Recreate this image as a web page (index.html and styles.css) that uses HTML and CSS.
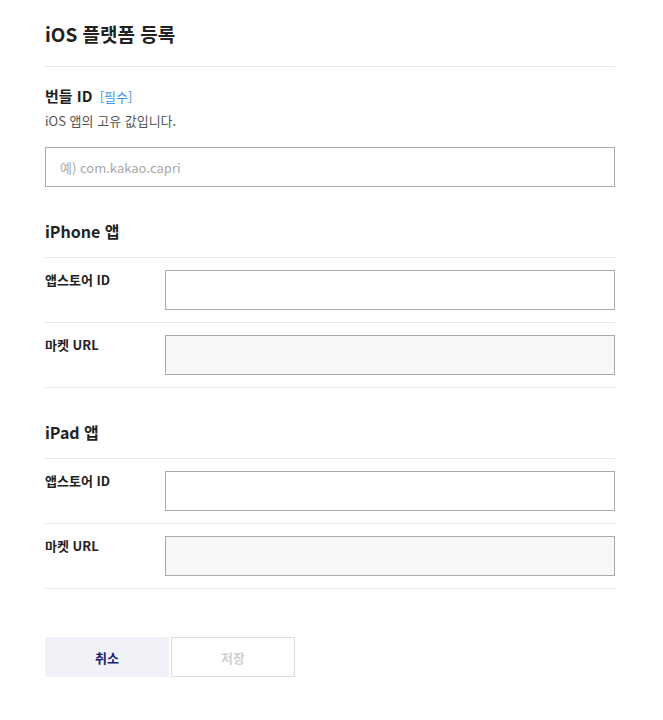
FILE: index.html
```html
<!DOCTYPE html>
<html lang="ko">
<head>
<meta charset="utf-8">
<link rel="stylesheet" href="styles.css">
</head>
<body>
<div class="page">
  <h1 class="title">iOS 플랫폼 등록</h1>

  <div class="field">
    <div class="field-label">번들 ID <span class="req">[필수]</span></div>
    <p class="desc">iOS 앱의 고유 값입니다.</p>
    <input class="input" type="text" placeholder="예) com.kakao.capri">
  </div>

  <h2 class="group-title">iPhone 앱</h2>
  <div class="row">
    <div class="row-label">앱스토어 ID</div>
    <input class="input" type="text">
  </div>
  <div class="row">
    <div class="row-label">마켓 URL</div>
    <input class="input input-disabled" type="text" disabled>
  </div>

  <h2 class="group-title">iPad 앱</h2>
  <div class="row">
    <div class="row-label">앱스토어 ID</div>
    <input class="input" type="text">
  </div>
  <div class="row">
    <div class="row-label">마켓 URL</div>
    <input class="input input-disabled" type="text" disabled>
  </div>

  <div class="actions">
    <button class="btn btn-cancel">취소</button>
    <button class="btn btn-save">저장</button>
  </div>
</div>
</body>
</html>
```

FILE: styles.css
```css
* { box-sizing: border-box; }
body {
  margin: 0;
  background: #fff;
  font-family: "Noto Sans CJK KR", "Noto Sans", sans-serif;
  color: #222;
}
.page {
  width: 570px;
  margin-left: 45px;
  padding-top: 20px;
}
.title {
  margin: 0;
  font-size: 19px;
  line-height: 28px;
  font-weight: 700;
  padding-bottom: 18px;
  border-bottom: 1px solid #e6e6e6;
}
.field {
  padding-top: 18px;
}
.field-label {
  font-size: 15px;
  line-height: 22px;
  height: 22px;
  font-weight: 700;
}
.req {
  font-size: 13px;
  line-height: 1;
  font-weight: 400;
  color: #3a97f0;
  margin-left: 3px;
}
.desc {
  margin: 4px 0 0;
  font-size: 13px;
  line-height: 20px;
  color: #555;
}
.input {
  display: block;
  width: 100%;
  height: 40px;
  border: 1px solid #ababab;
  border-radius: 0;
  background: #fff;
  padding: 0 14px;
  font-family: inherit;
  font-size: 13px;
  color: #222;
  outline: none;
}
.field .input { margin-top: 16px; }
.input::placeholder { color: #a8a8a8; }
.input-disabled { background: #f6f7f7; }
.group-title {
  margin: 32px 0 0;
  font-size: 16px;
  line-height: 24px;
  font-weight: 700;
  padding-bottom: 14px;
  border-bottom: 1px solid #e6e6e6;
}
.row {
  display: flex;
  align-items: flex-start;
  padding: 12px 0;
  border-bottom: 1px solid #e6e6e6;
}
.row-label {
  width: 120px;
  flex: none;
  font-size: 13px;
  line-height: 20px;
  font-weight: 700;
}
.row .input { flex: 1; }
.actions {
  display: flex;
  gap: 2px;
  margin-top: 48px;
}
.btn {
  width: 124px;
  height: 40px;
  font-family: inherit;
  font-size: 13px;
  font-weight: 700;
  border-radius: 0;
  padding: 0;
}
.btn-cancel {
  background: #f1f2f7;
  border: none;
  color: #1b2070;
}
.btn-save {
  background: #fff;
  border: 1px solid #dcdcdc;
  color: #cfcfcf;
}
```
